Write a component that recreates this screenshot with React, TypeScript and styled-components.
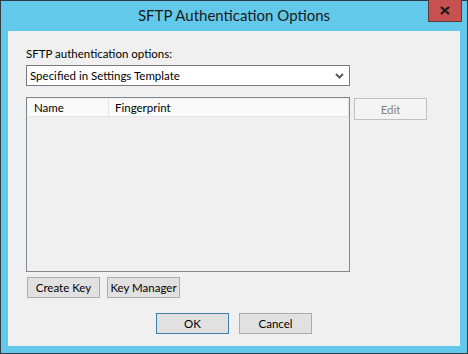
import styled, { createGlobalStyle } from "styled-components";

/* base */
const Global = createGlobalStyle`
  html, body {
    margin: 0;
    padding: 0;
    background: #63c9ea;
  }
  * { box-sizing: border-box; }
`;

const Window = styled.div`
  width: 468px;
  height: 354px;
  border: 1px solid #2d3b44;
  background: #63c9ea;
  display: flex;
  flex-direction: column;
  padding: 0 7px 7px 7px;
  font-family: Lato, "Liberation Sans", sans-serif;
`;

const TitleBar = styled.div`
  height: 30px;
  display: grid;
  grid-template-columns: 1fr auto 1fr;
  align-items: start;
  margin: 0 -7px;
`;

const Title = styled.div`
  grid-column: 2;
  font-size: 15px;
  color: #1b1b1b;
  line-height: 30px;
  margin-top: -1px;
`;

const CloseBtn = styled.div`
  grid-column: 3;
  justify-self: end;
  margin: -1px 5px 0 0;
  width: 34px;
  height: 22px;
  background: #c75050;
  border: 1px solid #5a3a3a;
  border-top: none;
  display: flex;
  align-items: center;
  justify-content: center;
`;

const Client = styled.div`
  flex: 1;
  background: #f0f0f0;
  padding: 12px 0 0 18px;
  display: flex;
  flex-direction: column;
  font-size: 11.5px;
  color: #000;
`;

const Label = styled.div`
  height: 22px;
  line-height: 22px;
`;

const Combo = styled.div`
  width: 324px;
  height: 21px;
  border: 1px solid #7a7a7a;
  background: #fff;
  display: flex;
  align-items: center;
  justify-content: space-between;
  padding: 0 5px 0 3px;
`;

const ListRow = styled.div`
  display: flex;
  align-items: flex-start;
  gap: 4px;
  margin-top: 11px;
`;

const List = styled.div`
  width: 324px;
  height: 175px;
  border: 1px solid #828790;
  background: #f0f0f0;
  padding: 1px;
`;

const Header = styled.div`
  display: flex;
  height: 18px;
  width: 321px;
`;

const HeadCell = styled.div<{ $w?: number }>`
  ${(p) => (p.$w ? `width: ${p.$w}px;` : "flex: 1;")}
  background: #fafafa;
  border-right: 1px solid #e5e5e5;
  border-bottom: 1px solid #e5e5e5;
  padding-left: 6px;
  line-height: 17px;
`;

const Button = styled.button<{ $h?: number; $default?: boolean }>`
  width: 73px;
  height: ${(p) => p.$h ?? 21}px;
  padding: 0;
  white-space: nowrap;
  font: inherit;
  color: #000;
  background: #e1e1e1;
  border: 1px solid ${(p) => (p.$default ? "#3c7fb1" : "#adadad")};
  border-radius: 0;
  &:disabled {
    margin-top: 1px;
    background: #f4f4f4;
    color: #838383;
    border-color: #bfbfbf;
  }
`;

const ToolRow = styled.div`
  display: flex;
  gap: 7px;
  margin-top: 5px;
  padding-left: 1px;
`;

const Footer = styled.div`
  display: flex;
  gap: 10px;
  margin-top: 15px;
  padding-left: 130px;
`;

const Chevron = () => (
  <svg width="9" height="6" viewBox="0 0 9 6">
    <path d="M1 1 L4.5 4.5 L8 1" stroke="#5a5a5a" strokeWidth="2" fill="none" />
  </svg>
);

const CloseX = () => (
  <svg width="10" height="9" viewBox="0 0 10 9">
    <path d="M1 1 L9 8 M9 1 L1 8" stroke="#1a1a1a" strokeWidth="2.2" fill="none" />
  </svg>
);

export default function App() {
  return (
    <>
      <Global />
      <Window>
        <TitleBar>
          <Title>SFTP Authentication Options</Title>
          <CloseBtn><CloseX /></CloseBtn>
        </TitleBar>
        <Client>
          <Label>SFTP authentication options:</Label>
          <Combo>
            <span>Specified in Settings Template</span>
            <Chevron />
          </Combo>
          <ListRow>
            <List>
              <Header>
                <HeadCell $w={81}>Name</HeadCell>
                <HeadCell>Fingerprint</HeadCell>
              </Header>
            </List>
            <Button $h={22} disabled>Edit</Button>
          </ListRow>
          <ToolRow>
            <Button>Create Key</Button>
            <Button>Key Manager</Button>
          </ToolRow>
          <Footer>
            <Button $default>OK</Button>
            <Button>Cancel</Button>
          </Footer>
        </Client>
      </Window>
    </>
  );
}
